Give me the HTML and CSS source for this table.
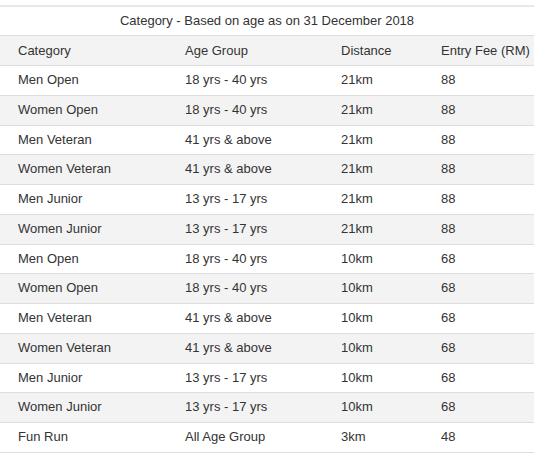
FILE: index.html
```html
<!DOCTYPE html>
<html>
<head>
<meta charset="utf-8">
<link rel="stylesheet" href="styles.css">
</head>
<body>
<table class="cat-table">
  <colgroup>
    <col class="c1"><col class="c2"><col class="c3"><col class="c4">
  </colgroup>
  <thead>
    <tr class="title-row"><th colspan="4">Category - Based on age as on 31 December 2018</th></tr>
    <tr class="head-row"><th>Category</th><th>Age Group</th><th>Distance</th><th>Entry Fee (RM)</th></tr>
  </thead>
  <tbody>
    <tr><td>Men Open</td><td>18 yrs - 40 yrs</td><td>21km</td><td>88</td></tr>
    <tr><td>Women Open</td><td>18 yrs - 40 yrs</td><td>21km</td><td>88</td></tr>
    <tr><td>Men Veteran</td><td>41 yrs &amp; above</td><td>21km</td><td>88</td></tr>
    <tr><td>Women Veteran</td><td>41 yrs &amp; above</td><td>21km</td><td>88</td></tr>
    <tr><td>Men Junior</td><td>13 yrs - 17 yrs</td><td>21km</td><td>88</td></tr>
    <tr><td>Women Junior</td><td>13 yrs - 17 yrs</td><td>21km</td><td>88</td></tr>
    <tr><td>Men Open</td><td>18 yrs - 40 yrs</td><td>10km</td><td>68</td></tr>
    <tr><td>Women Open</td><td>18 yrs - 40 yrs</td><td>10km</td><td>68</td></tr>
    <tr><td>Men Veteran</td><td>41 yrs &amp; above</td><td>10km</td><td>68</td></tr>
    <tr><td>Women Veteran</td><td>41 yrs &amp; above</td><td>10km</td><td>68</td></tr>
    <tr><td>Men Junior</td><td>13 yrs - 17 yrs</td><td>10km</td><td>68</td></tr>
    <tr><td>Women Junior</td><td>13 yrs - 17 yrs</td><td>10km</td><td>68</td></tr>
    <tr><td>Fun Run</td><td>All Age Group</td><td>3km</td><td>48</td></tr>
  </tbody>
</table>
</body>
</html>
```
FILE: styles.css
```css
html, body {
  margin: 0;
  padding: 0;
  background: #fff;
}
body {
  padding-top: 5px;
  font-family: "Liberation Sans", Arial, sans-serif;
  font-size: 13px;
  color: #333;
}
.cat-table {
  width: 534px;
  border-collapse: collapse;
  border-spacing: 0;
  table-layout: fixed;
  border-top: 2px solid #e8e8e8;
}
.c1 { width: 177px; }
.c2 { width: 156px; }
.c3 { width: 100px; }
.c4 { width: 101px; }
.cat-table th,
.cat-table td {
  font-weight: normal;
  text-align: left;
  padding: 5px 0 5px 8px;
  line-height: 18.77px;
  border-bottom: 1px solid #dddddd;
  white-space: nowrap;
}
.cat-table th:first-child,
.cat-table td:first-child {
  padding-left: 18px;
}
.title-row th {
  text-align: center;
  padding: 5px 0 5px 0;
  line-height: 18px;
}
.title-row th:first-child {
  padding-left: 0;
}
.head-row th {
  background: #f3f3f3;
  line-height: 19px;
}
.cat-table tbody tr:nth-child(even) td {
  background: #f3f3f3;
}
```
